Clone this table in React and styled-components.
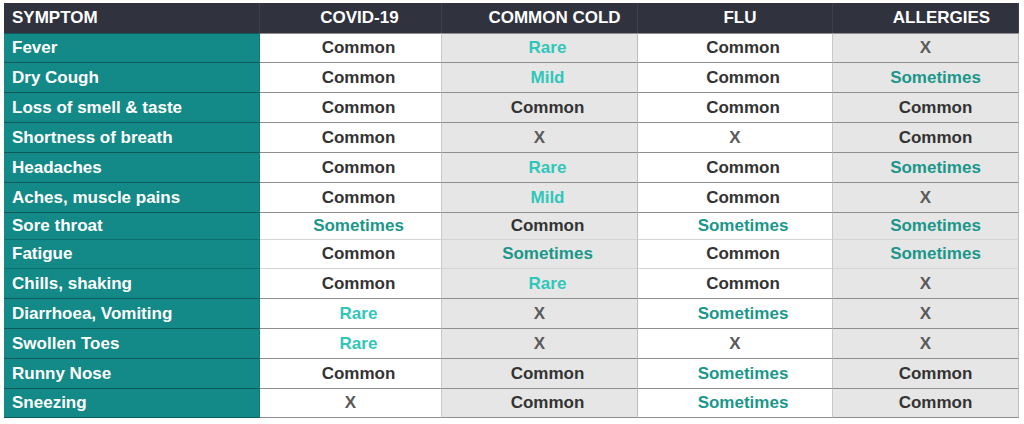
import React from "react";
import styled, { createGlobalStyle } from "styled-components";

const Global = createGlobalStyle`
  html, body { margin: 0; padding: 0; background: #ffffff; }
  body { font-family: "Liberation Sans", Arial, sans-serif; }
`;

const Table = styled.div`
  display: grid;
  grid-template-columns: 256px 182px 196px 195px 186px;
  grid-template-rows: 30px 29px 30px 30px 30px 30px 30px 27px 29px 30px 30px 30px 30px 30px;
  margin: 3px 0 0 4px;
  width: 1015px;
`;

const HeaderCell = styled.div`
  background: #30323e;
  color: #ffffff;
  font-weight: 700;
  font-size: 17px;
  display: flex;
  align-items: center;
  justify-content: ${(p) => (p.$left ? "flex-start" : "center")};
  padding-left: ${(p) => p.$pad || 0}px;
  border-right: 1px solid #3d404c;
  box-sizing: border-box;
`;

const SymptomCell = styled.div`
  background: #138a87;
  color: #ffffff;
  font-weight: 700;
  font-size: 17px;
  display: flex;
  align-items: center;
  padding-left: 8px;
  box-sizing: border-box;
  border-top: 1px solid ${(p) => (p.$light ? "#0f6f6c" : "#0d5a58")};
  border-bottom: ${(p) => (p.$last ? "1px solid #0d5a58" : "none")};
  border-right: 1px solid #0f7a77;
`;

const colors = {
  Common: "#333333",
  Rare: "#30c7ba",
  Mild: "#30c7ba",
  Sometimes: "#1a978a",
  X: "#5a5a5a",
};

const ValueCell = styled.div`
  background: ${(p) => (p.$gray ? "#e6e6e6" : "#ffffff")};
  color: ${(p) => p.$color};
  font-weight: 700;
  font-size: 17px;
  display: flex;
  align-items: center;
  justify-content: center;
  padding-left: ${(p) => p.$pad}px;
  box-sizing: border-box;
  border-top: 1px solid ${(p) => (p.$light ? "#d4d4d4" : "#8e8e8e")};
  border-bottom: ${(p) => (p.$last ? "1px solid #8e8e8e" : "none")};
  border-right: 1px solid ${(p) => (p.$gray ? "#bdbdbd" : "#c8c8c8")};
`;

const headers = [
  { t: "SYMPTOM", left: true, pad: 8 },
  { t: "COVID-19", pad: 18 },
  { t: "COMMON COLD", pad: 30 },
  { t: "FLU", pad: 10 },
  { t: "ALLERGIES", pad: 32 },
];

const rows = [
  ["Fever", "Common", "Rare", "Common", "X"],
  ["Dry Cough", "Common", "Mild", "Common", "Sometimes"],
  ["Loss of smell & taste", "Common", "Common", "Common", "Common"],
  ["Shortness of breath", "Common", "X", "X", "Common"],
  ["Headaches", "Common", "Rare", "Common", "Sometimes"],
  ["Aches, muscle pains", "Common", "Mild", "Common", "X"],
  ["Sore throat", "Sometimes", "Common", "Sometimes", "Sometimes"],
  ["Fatigue", "Common", "Sometimes", "Common", "Sometimes"],
  ["Chills, shaking", "Common", "Rare", "Common", "X"],
  ["Diarrhoea, Vomiting", "Rare", "X", "Sometimes", "X"],
  ["Swollen Toes", "Rare", "X", "X", "X"],
  ["Runny Nose", "Common", "Common", "Sometimes", "Common"],
  ["Sneezing", "X", "Common", "Sometimes", "Common"],
];

const wordPad = [0, 16, 16, 16, 20];

export default function App() {
  return (
    <>
      <Global />
      <Table>
        {headers.map((h) => (
          <HeaderCell key={h.t} $left={h.left} $pad={h.pad}>
            {h.t}
          </HeaderCell>
        ))}
        {rows.map((r, ri) => {
          const light = ri === 7 || ri === 8;
          const last = ri === rows.length - 1;
          return (
            <React.Fragment key={r[0]}>
              <SymptomCell $light={light} $last={last}>{r[0]}</SymptomCell>
              {r.slice(1).map((v, ci) => (
                <ValueCell
                  key={ci}
                  $gray={ci === 1 || ci === 3}
                  $color={colors[v]}
                  $pad={v === "X" ? 0 : wordPad[ci + 1]}
                  $light={light}
                  $last={last}
                >
                  {v}
                </ValueCell>
              ))}
            </React.Fragment>
          );
        })}
      </Table>
    </>
  );
}
